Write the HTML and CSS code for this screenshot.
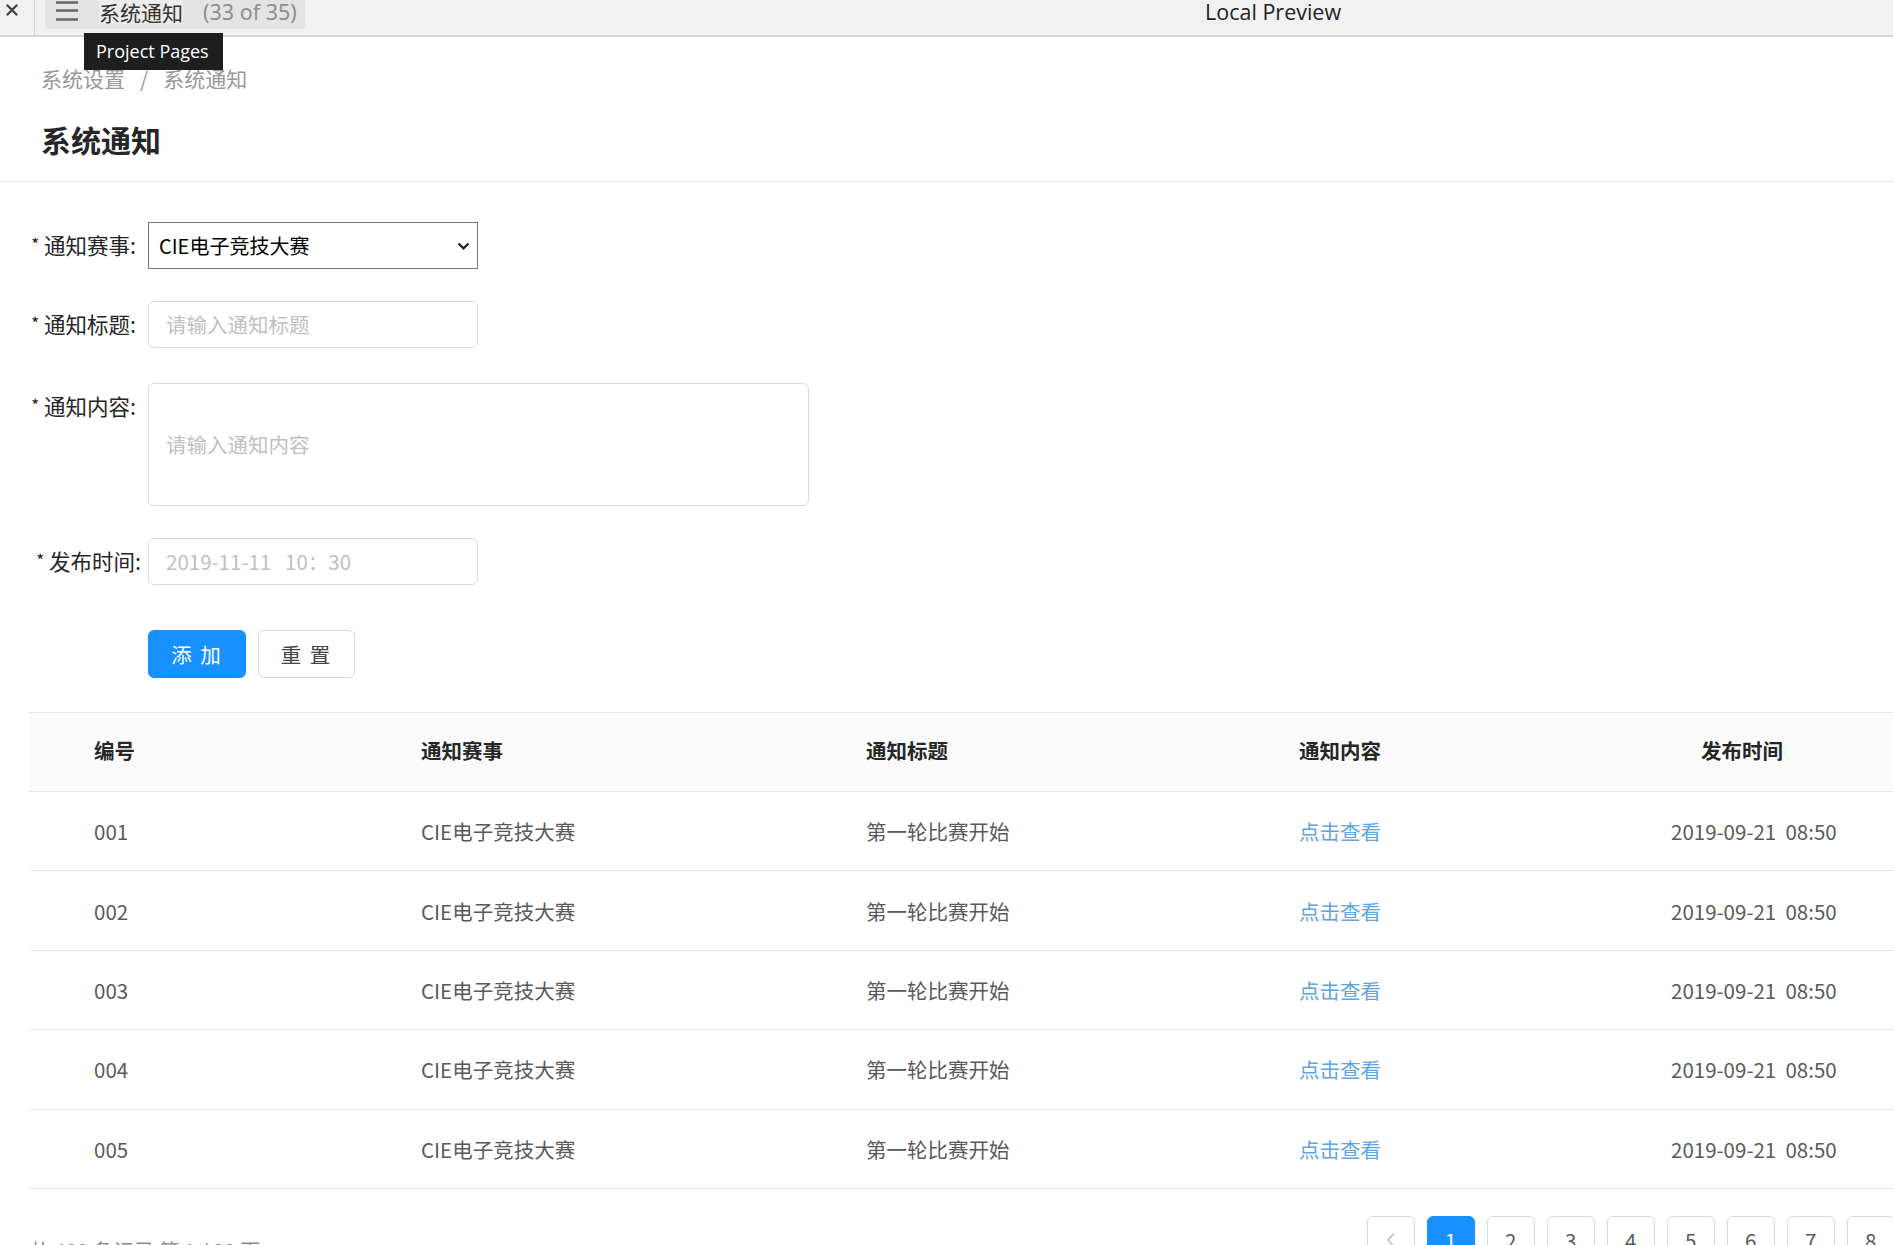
FILE: index.html
```html
<!DOCTYPE html>
<html lang="zh-CN">
<head>
<meta charset="utf-8">
<title>系统通知</title>
<link rel="stylesheet" href="styles.css">
</head>
<body>
<div class="topbar">
  <svg class="close" width="12" height="12" viewBox="0 0 12 12"><path d="M1.5 1.5 L10.5 10.5 M10.5 1.5 L1.5 10.5" stroke="#444" stroke-width="2.4" stroke-linecap="round"/></svg>
  <span class="vsep"></span>
  <div class="tab">
    <svg class="menu" width="24" height="22" viewBox="0 0 24 22"><path d="M0 2.5 H22 M0 10.5 H22 M0 19.5 H22" stroke="#666" stroke-width="2.4"/></svg>
    <span class="tab-title">系统通知</span>
    <span class="tab-count">(33 of 35)</span>
  </div>
  <span class="preview">Local Preview</span>
</div>
<div class="tooltip">Project Pages</div>

<div class="page-header">
  <div class="breadcrumb"><span>系统设置</span><span class="bc-sep">/</span><span>系统通知</span></div>
  <h1 class="title">系统通知</h1>
</div>

<div class="content">
  <div class="form">
    <div class="form-row gap-a">
      <label class="form-label"><span class="req">*</span> 通知赛事:</label>
      <div class="select"><span>CIE电子竞技大赛</span><svg width="13" height="8" viewBox="0 0 13 8"><path d="M1.5 1.5 L6.5 6.3 L11.5 1.5" fill="none" stroke="#222" stroke-width="2.3"/></svg></div>
    </div>
    <div class="form-row gap-b">
      <label class="form-label"><span class="req">*</span> 通知标题:</label>
      <div class="input placeholder">请输入通知标题</div>
    </div>
    <div class="form-row gap-c">
      <label class="form-label"><span class="req">*</span> 通知内容:</label>
      <div class="textarea placeholder">请输入通知内容</div>
    </div>
    <div class="form-row gap-d">
      <label class="form-label label-shift"><span class="req">*</span> 发布时间:</label>
      <div class="input placeholder">2019-11-11&nbsp;&nbsp;&nbsp;10：30</div>
    </div>
    <div class="actions">
      <button class="btn btn-primary">添 加</button>
      <button class="btn">重 置</button>
    </div>
  </div>

  <div class="table">
    <div class="tr thead">
      <div class="td">编号</div>
      <div class="td">通知赛事</div>
      <div class="td">通知标题</div>
      <div class="td">通知内容</div>
      <div class="td th-time">发布时间</div>
    </div>
    <div class="tr">
      <div class="td">001</div><div class="td">CIE电子竞技大赛</div><div class="td">第一轮比赛开始</div><div class="td link">点击查看</div><div class="td time">2019-09-21&nbsp;&nbsp;08:50</div>
    </div>
    <div class="tr">
      <div class="td">002</div><div class="td">CIE电子竞技大赛</div><div class="td">第一轮比赛开始</div><div class="td link">点击查看</div><div class="td time">2019-09-21&nbsp;&nbsp;08:50</div>
    </div>
    <div class="tr">
      <div class="td">003</div><div class="td">CIE电子竞技大赛</div><div class="td">第一轮比赛开始</div><div class="td link">点击查看</div><div class="td time">2019-09-21&nbsp;&nbsp;08:50</div>
    </div>
    <div class="tr">
      <div class="td">004</div><div class="td">CIE电子竞技大赛</div><div class="td">第一轮比赛开始</div><div class="td link">点击查看</div><div class="td time">2019-09-21&nbsp;&nbsp;08:50</div>
    </div>
    <div class="tr">
      <div class="td">005</div><div class="td">CIE电子竞技大赛</div><div class="td">第一轮比赛开始</div><div class="td link">点击查看</div><div class="td time">2019-09-21&nbsp;&nbsp;08:50</div>
    </div>
  </div>

  <div class="pager-row">
    <div class="total">共 400 条记录 第 1 / 80 页</div>
    <ul class="pager">
      <li class="pg prev"><svg width="10" height="16" viewBox="0 0 10 16"><path d="M8 1.5 L2 8 L8 14.5" fill="none" stroke="#bfbfbf" stroke-width="1.6"/></svg></li>
      <li class="pg active">1</li>
      <li class="pg">2</li>
      <li class="pg">3</li>
      <li class="pg">4</li>
      <li class="pg">5</li>
      <li class="pg">6</li>
      <li class="pg">7</li>
      <li class="pg">8</li>
    </ul>
  </div>
</div>
</body>
</html>
```
FILE: styles.css
```css
* { box-sizing: border-box; }
html, body {
  margin: 0;
  padding: 0;
}
body {
  width: 1893px;
  height: 1245px;
  overflow: hidden;
  background: #fff;
  font-family: "Noto Sans CJK SC", "Noto Sans", sans-serif;
  font-size: 21px;
  color: #262626;
  position: relative;
}

/* top bar */
.topbar {
  height: 37px;
  background: #f1f1f1;
  border-bottom: 2px solid #d6d6d6;
  display: flex;
  align-items: flex-start;
}
.close {
  margin: 4px 0 0 6px;
  flex-shrink: 0;
}
.vsep {
  width: 1px;
  height: 35px;
  background: #d2d2d2;
  margin-left: 16px;
  flex-shrink: 0;
}
.tab {
  margin-left: 10px;
  width: 260px;
  height: 29px;
  background: #e4e4e4;
  border-radius: 0 0 4px 4px;
  display: flex;
  align-items: flex-start;
  flex-shrink: 0;
}
.menu {
  margin: 0 0 0 11px;
}
.tab-title {
  margin-left: 19px;
  font-size: 21px;
  line-height: 24px;
  color: #333;
  background: #ececec;
}
.tab-count {
  margin-left: 20px;
  font-family: "Noto Sans", "Open Sans", sans-serif;
  font-size: 21.5px;
  line-height: 23px;
  color: #8e8e8e;
}
.preview {
  margin-left: 900px;
  font-family: "Open Sans", "Noto Sans", sans-serif;
  font-size: 21.5px;
  line-height: 23px;
  color: #222;
}
.tooltip {
  position: absolute;
  left: 84px;
  top: 33px;
  width: 139px;
  height: 37px;
  background: #1e1e1e;
  color: #fff;
  font-family: "Open Sans", "Noto Sans", sans-serif;
  font-size: 18px;
  line-height: 37px;
  padding-left: 12px;
  z-index: 5;
}

/* page header */
.page-header {
  padding: 25px 0 21px 41px;
  border-bottom: 1px solid #e8e8e8;
}
.breadcrumb {
  font-size: 21px;
  line-height: 32px;
  color: #999;
  display: flex;
}
.bc-sep {
  margin: 0 15px 0 15px;
}
.title {
  margin: 24px 0 0;
  font-size: 30px;
  line-height: 42px;
  font-weight: 700;
  color: #262626;
}

/* content */
.content {
  padding: 40px 0 0 29px;
}
.form-row {
  display: grid;
  grid-template-columns: 107px auto;
  column-gap: 12px;
  align-items: start;
}
.gap-a { margin-bottom: 32px; }
.gap-b { margin-bottom: 35px; }
.gap-c { margin-bottom: 32px; }
.gap-d { margin-bottom: 45px; }
.form-label {
  text-align: right;
  white-space: nowrap;
  line-height: 43px;
  font-size: 21.5px;
  color: #262626;
}
.label-shift { margin-right: -5px; }
.req {
  font-size: 17px;
  vertical-align: 3px;
}
.select {
  width: 330px;
  height: 47px;
  border: 1px solid #767676;
  background: #fff;
  display: flex;
  align-items: center;
  justify-content: space-between;
  padding: 0 7px 0 10px;
  font-size: 20px;
  color: #000;
}
.select svg { margin-top: 1px; }
.input {
  width: 330px;
  height: 47px;
  border: 1.5px solid #d9d9d9;
  border-radius: 6px;
  padding: 0 17px;
  line-height: 44px;
}
.textarea {
  width: 661px;
  height: 123px;
  border: 1.5px solid #d9d9d9;
  border-radius: 6px;
  padding: 44px 17px 0;
  line-height: 32px;
}
.placeholder {
  color: #bfbfbf;
  font-size: 20.5px;
}
.actions {
  padding-left: 119px;
  display: flex;
  gap: 12px;
}
.btn {
  height: 48px;
  width: 97px;
  border: 1.5px solid #d9d9d9;
  border-radius: 6px;
  background: #fff;
  font-family: "Noto Sans CJK SC", sans-serif;
  font-size: 20.5px;
  color: #444;
  padding: 0;
  letter-spacing: 2px;
}
.btn-primary {
  width: 98px;
  background: #1890ff;
  border-color: #1890ff;
  color: #fff;
}

/* table */
.table {
  margin-top: 34px;
}
.tr {
  display: grid;
  grid-template-columns: 327px 445px 433px 402px 1fr;
  height: 79.4px;
  align-items: center;
  border-bottom: 1px solid #e8e8e8;
}
.thead {
  height: 80px;
  background: #fafafa;
  border-top: 1px solid #e8e8e8;
  font-weight: 700;
  color: #262626;
  padding-bottom: 5px;
}
.td {
  padding-left: 65px;
  white-space: nowrap;
  font-size: 20.5px;
}
.tr:not(.thead) .td { color: #595959; }
.tr .td.link { color: #62a4de; }
.thead .th-time { padding-left: 65px; }
.tr .td.time { padding-left: 35px; color: #595959; }

/* pagination */
.pager-row {
  display: grid;
  grid-template-columns: 1338px auto;
  margin-top: 27px;
  align-items: start;
}
.total {
  margin-top: 18px;
  line-height: 32px;
  font-size: 20.5px;
  color: #8c8c8c;
}
.pager {
  list-style: none;
  margin: 0;
  padding: 0;
  display: flex;
  gap: 12.5px;
}
.pg {
  width: 47.5px;
  height: 48px;
  flex-shrink: 0;
  border: 1.5px solid #d9d9d9;
  border-radius: 6px;
  display: flex;
  align-items: center;
  justify-content: center;
  font-size: 20.5px;
  color: #595959;
  background: #fff;
}
.pg.active {
  background: #1890ff;
  border-color: #1890ff;
  color: #fff;
}
```
